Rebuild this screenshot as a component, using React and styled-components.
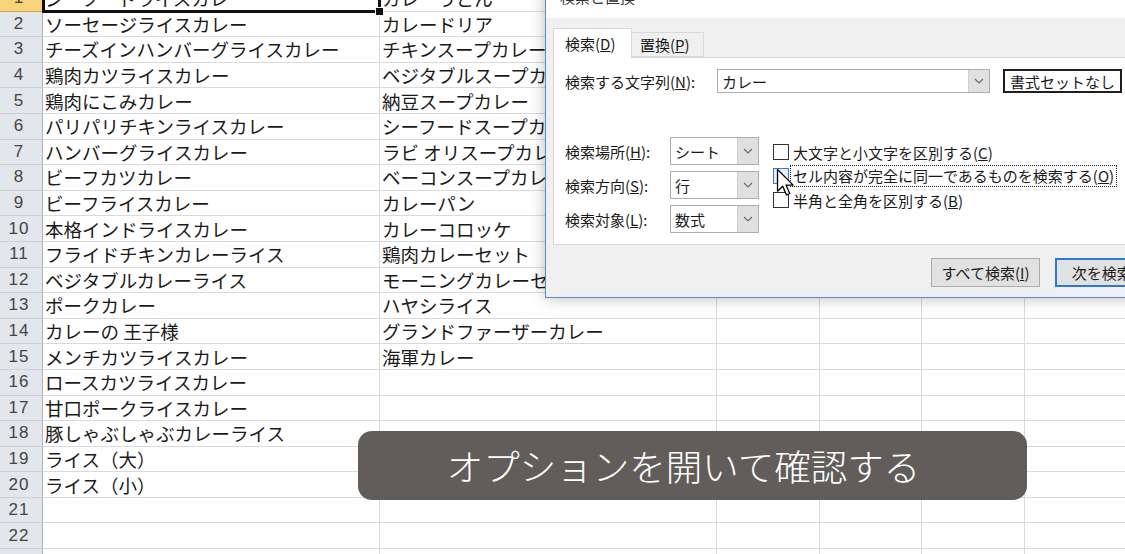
import React from "react";
import styled, { createGlobalStyle } from "styled-components";

const Global = createGlobalStyle`
  html, body { margin: 0; padding: 0; background: #fff; overflow: hidden; }
  * { box-sizing: border-box; }
`;

const JP = `"Noto Sans CJK JP", "Noto Sans", sans-serif`;

const Screen = styled.div`
  position: relative;
  width: 1125px;
  height: 554px;
  overflow: hidden;
  background: #fff;
  font-family: ${JP};
`;

const Sheet = styled.div`
  display: grid;
  grid-template-columns: 43px 337px 337px 103px 102px 103px 130px;
  grid-auto-rows: 25.6px;
  margin-top: -14px;
`;

const RowHead = styled.div`
  display: flex;
  align-items: center;
  justify-content: center;
  padding-right: 4px;
  background: ${(p) => (p.$selected ? "#f7d47c" : "#e3e6ea")};
  border-right: 1px solid #aeb3b9;
  border-bottom: 1px solid ${(p) => (p.$selected ? "#d1a84c" : "#cdd1d6")};
  color: #444;
  font-family: "Liberation Sans", sans-serif;
  font-size: 17px;
  letter-spacing: 1px;
`;

const Cell = styled.div`
  position: relative;
  display: flex;
  align-items: center;
  padding-left: 2px;
  border-right: 1px solid #d9dadb;
  border-bottom: 1px solid #d9dadb;
  color: #1a1a1a;
  font-size: 18.5px;
  white-space: nowrap;
  overflow: ${(p) => (p.$active ? "visible" : "hidden")};
  z-index: ${(p) => (p.$active ? 2 : 0)};

  ${(p) =>
    p.$active &&
    `
    &::after {
      content: "";
      position: absolute;
      left: -1px; top: -2px; right: -2px; bottom: -2px;
      border: 3px solid #111;
      pointer-events: none;
    }
    &::before {
      content: "";
      position: absolute;
      right: -5px; bottom: -5px;
      width: 7px; height: 7px;
      background: #111;
      border: 1px solid #fff;
      z-index: 3;
    }
  `}
`;

const Dialog = styled.div`
  position: absolute;
  left: 545px;
  top: -30px;
  width: 640px;
  height: 328px;
  display: flex;
  flex-direction: column;
  background: #f0f0f0;
  border: 1px solid #4f8fd6;
  box-shadow: 0 0 14px rgba(0, 0, 0, 0.28);
  font-family: ${JP};
  font-size: 15px;
  color: #1a1a1a;
  z-index: 5;
`;

const TitleBar = styled.div`
  height: 47px;
  flex: none;
  background: #fff;
  padding: 16px 0 0 14px;
  line-height: 20px;
  color: #333;
`;

const Body = styled.div`
  padding: 10px 0 0 7px;
  flex: none;
`;

const TabStrip = styled.div`
  display: flex;
  align-items: flex-end;
  height: 29px;
`;

const Tab = styled.div`
  display: flex;
  align-items: center;
  height: ${(p) => (p.$active ? "30px" : "25px")};
  width: ${(p) => (p.$active ? "79px" : "72px")};
  padding-left: ${(p) => (p.$active ? "11px" : "8px")};
  margin-bottom: ${(p) => (p.$active ? "-1px" : "0")};
  background: ${(p) => (p.$active ? "#fff" : "#f0f0f0")};
  border: 1px solid #d9d9d9;
  border-bottom: ${(p) => (p.$active ? "none" : "1px solid #d9d9d9")};
  border-left: ${(p) => (p.$active ? "1px solid #d9d9d9" : "none")};
  position: relative;
  z-index: ${(p) => (p.$active ? 1 : 0)};
`;

const Panel = styled.div`
  height: 188px;
  background: #fff;
  border: 1px solid #d9d9d9;
  padding: 11px 0 0 11px;
`;

const FieldRow = styled.div`
  display: flex;
  align-items: center;
  height: 24px;
`;

const Label = styled.div`
  width: ${(p) => p.$w}px;
  flex: none;
  white-space: nowrap;
`;

const Combo = styled.div`
  display: flex;
  width: ${(p) => p.$w}px;
  height: ${(p) => p.$h}px;
  border: 1px solid #adadad;
  background: #fff;
  flex: none;
`;

const ComboText = styled.div`
  flex: 1;
  display: flex;
  align-items: center;
  padding-left: 4px;
  white-space: nowrap;
`;

const ComboButton = styled.div`
  width: 21px;
  flex: none;
  display: flex;
  align-items: center;
  justify-content: center;
  background: #e0e0e0;
  border-left: 1px solid #cfcfcf;
`;

const FormatButton = styled.div`
  margin-left: 13px;
  width: 119px;
  height: 24px;
  border: 2px solid #1e1e1e;
  background: #fff;
  display: flex;
  align-items: center;
  justify-content: center;
  white-space: nowrap;
`;

const Lower = styled.div`
  display: flex;
  margin-top: 44px;
`;

const SelectCol = styled.div`
  display: flex;
  flex-direction: column;
  gap: 6px;
`;

const SelectRow = styled.div`
  display: flex;
  align-items: center;
  height: 28px;
`;

const CheckCol = styled.div`
  display: flex;
  flex-direction: column;
  margin: 3px 0 0 14px;
`;

const CheckRow = styled.div`
  display: flex;
  align-items: center;
  height: 24px;
  white-space: nowrap;
`;

const Box = styled.div`
  width: 16px;
  height: 16px;
  flex: none;
  margin-right: ${(p) => (p.$focus ? "2px" : "4px")};
  border: 1px solid ${(p) => (p.$hover ? "#2f7dc4" : "#333")};
  background: ${(p) => (p.$hover ? "#e3f0fb" : "#fff")};
`;

const FocusText = styled.span`
  outline: 1px dotted #222;
  outline-offset: 0;
  padding: 0 2px;
  line-height: 20px;
`;

const Footer = styled.div`
  display: flex;
  gap: 15px;
  padding: 13px 0 0 385px;
`;

const Button = styled.div`
  height: 29px;
  width: ${(p) => p.$w}px;
  flex: none;
  display: flex;
  align-items: center;
  justify-content: center;
  background: #e1e1e1;
  border: ${(p) => (p.$default ? "2px solid #2a7ad2" : "1px solid #adadad")};
  white-space: nowrap;
`;

const Cursor = styled.svg`
  position: absolute;
  left: 776px;
  top: 168px;
  z-index: 10;
`;

const Caption = styled.div`
  position: absolute;
  left: 358px;
  top: 431px;
  width: 669px;
  height: 69px;
  border-radius: 14px;
  background: rgba(88, 84, 81, 0.95);
  display: flex;
  align-items: center;
  justify-content: center;
  padding-right: 18px;
  color: #fff;
  font-family: ${JP};
  font-weight: 300;
  font-size: 36.5px;
  z-index: 6;
`;

const colA = [
  "シーフードライスカレー",
  "ソーセージライスカレー",
  "チーズインハンバーグライスカレー",
  "鶏肉カツライスカレー",
  "鶏肉にこみカレー",
  "パリパリチキンライスカレー",
  "ハンバーグライスカレー",
  "ビーフカツカレー",
  "ビーフライスカレー",
  "本格インドライスカレー",
  "フライドチキンカレーライス",
  "ベジタブルカレーライス",
  "ポークカレー",
  "カレーの 王子様",
  "メンチカツライスカレー",
  "ロースカツライスカレー",
  "甘口ポークライスカレー",
  "豚しゃぶしゃぶカレーライス",
  "ライス（大）",
  "ライス（小）",
  "",
  "",
  "",
];

const colB = [
  "カレーうどん",
  "カレードリア",
  "チキンスープカレー",
  "ベジタブルスープカレー",
  "納豆スープカレー",
  "シーフードスープカレー",
  "ラビ オリスープカレー",
  "ベーコンスープカレー",
  "カレーパン",
  "カレーコロッケ",
  "鶏肉カレーセット",
  "モーニングカレーセット",
  "ハヤシライス",
  "グランドファーザーカレー",
  "海軍カレー",
];

const Chevron = () => (
  <svg width="10" height="6" viewBox="0 0 10 6">
    <path d="M1 1 L5 5 L9 1" fill="none" stroke="#6b6b6b" strokeWidth="1.2" />
  </svg>
);

const Select = ({ value, w, h }) => (
  <Combo $w={w} $h={h}>
    <ComboText>{value}</ComboText>
    <ComboButton>
      <Chevron />
    </ComboButton>
  </Combo>
);

export default function App() {
  return (
    <Screen>
      <Global />
      <Sheet>
        {colA.map((a, i) => (
          <React.Fragment key={i}>
            <RowHead $selected={i === 0}>{i + 1}</RowHead>
            <Cell $active={i === 0}>{a}</Cell>
            <Cell>{colB[i] || ""}</Cell>
            <Cell />
            <Cell />
            <Cell />
            <Cell />
          </React.Fragment>
        ))}
      </Sheet>

      <Dialog>
        <TitleBar>検索と置換</TitleBar>
        <Body>
          <TabStrip>
            <Tab $active>
              検索(<u>D</u>)
            </Tab>
            <Tab>
              置換(<u>P</u>)
            </Tab>
          </TabStrip>
          <Panel>
            <FieldRow>
              <Label $w={152}>
                検索する文字列(<u>N</u>):
              </Label>
              <Select value="カレー" w={273} h={24} />
              <FormatButton>書式セットなし</FormatButton>
            </FieldRow>
            <Lower>
              <SelectCol>
                <SelectRow>
                  <Label $w={105}>
                    検索場所(<u>H</u>):
                  </Label>
                  <Select value="シート" w={89} h={28} />
                </SelectRow>
                <SelectRow>
                  <Label $w={105}>
                    検索方向(<u>S</u>):
                  </Label>
                  <Select value="行" w={89} h={28} />
                </SelectRow>
                <SelectRow>
                  <Label $w={105}>
                    検索対象(<u>L</u>):
                  </Label>
                  <Select value="数式" w={89} h={28} />
                </SelectRow>
              </SelectCol>
              <CheckCol>
                <CheckRow>
                  <Box />
                  大文字と小文字を区別する(<u>C</u>)
                </CheckRow>
                <CheckRow>
                  <Box $hover $focus />
                  <FocusText>
                    セル内容が完全に同一であるものを検索する(<u>O</u>)
                  </FocusText>
                </CheckRow>
                <CheckRow>
                  <Box />
                  半角と全角を区別する(<u>B</u>)
                </CheckRow>
              </CheckCol>
            </Lower>
          </Panel>
        </Body>
        <Footer>
          <Button $w={109}>
            すべて検索(<u>I</u>)
          </Button>
          <Button $w={112} $default>
            次を検索(<u>F</u>)
          </Button>
        </Footer>
      </Dialog>

      <Cursor width="19" height="29" viewBox="0 0 13 20">
        <path
          d="M1 1 L1 16 L4.6 12.6 L7.2 18.6 L9.4 17.6 L6.9 11.8 L11.8 11.8 Z"
          fill="#fff"
          stroke="#000"
          strokeWidth="0.9"
          strokeLinejoin="round"
        />
      </Cursor>

      <Caption>オプションを開いて確認する</Caption>
    </Screen>
  );
}
